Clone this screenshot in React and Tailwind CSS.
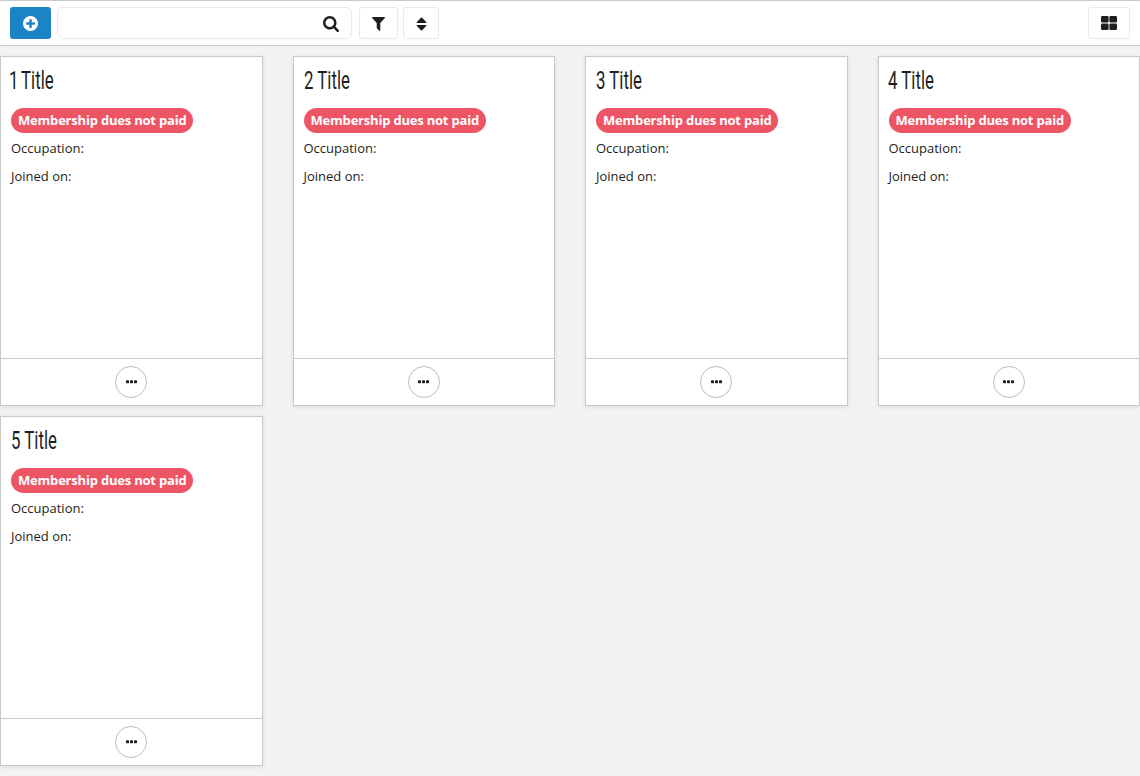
import React from "react";

const PlusIcon = () => (
  <svg className="mt-px h-[15px] w-[15px]" viewBox="0 0 1536 1536" fill="currentColor">
    <path d="M1216 832v-128q0-26-19-45t-45-19h-256v-256q0-26-19-45t-45-19h-128q-26 0-45 19t-19 45v256h-256q-26 0-45 19t-19 45v128q0 26 19 45t45 19h256v256q0 26 19 45t45 19h128q26 0 45-19t19-45v-256h256q26 0 45-19t19-45zm320-64q0 209-103 385.5t-279.5 279.5-385.5 103-385.5-103-279.5-279.5-103-385.5 103-385.5 279.5-279.5 385.5-103 385.5 103 279.5 279.5 103 385.5z" />
  </svg>
);

const SearchIcon = () => (
  <svg className="mt-[2px] h-4 w-4" viewBox="0 0 1664 1664" fill="currentColor">
    <path d="M1152 704q0-185-131.5-316.5t-316.5-131.5-316.5 131.5-131.5 316.5 131.5 316.5 316.5 131.5 316.5-131.5 131.5-316.5zm512 832q0 52-38 90t-90 38q-54 0-90-38l-343-342q-179 124-399 124-143 0-273.5-55.5t-225-150-150-225-55.5-273.5 55.5-273.5 150-225 225-150 273.5-55.5 273.5 55.5 225 150 150 225 55.5 273.5q0 220-124 399l343 343q37 37 37 90z" />
  </svg>
);

const FilterIcon = () => (
  <svg className="mt-[2px] h-[14px] w-[13px]" viewBox="0 0 1408 1408" preserveAspectRatio="none" fill="currentColor">
    <path d="M1403 39q17 41-14 70l-493 493v742q0 42-39 59-13 5-25 5-27 0-45-19l-256-256q-19-19-19-45v-486l-493-493q-31-29-14-70 17-39 59-39h1280q42 0 59 39z" />
  </svg>
);

const SortIcon = () => (
  <svg className="mt-[2px] h-[14px] w-[11px]" viewBox="0 0 11 14" fill="currentColor" stroke="currentColor" strokeLinejoin="round">
    <path d="M5.5 .7L10 5.5H1zM5.5 13.3L10 8.5H1z" />
  </svg>
);

const GridIcon = () => (
  <svg className="h-[14px] w-4" viewBox="0 0 16 14" fill="currentColor">
    <rect width="7.6" height="6.6" rx="1.3" />
    <rect x="8.4" width="7.6" height="6.6" rx="1.3" />
    <rect y="7.4" width="7.6" height="6.6" rx="1.3" />
    <rect x="8.4" y="7.4" width="7.6" height="6.6" rx="1.3" />
  </svg>
);

const DotsIcon = () => (
  <svg className="h-1 w-[11px]" viewBox="0 0 11 4" fill="currentColor">
    <rect y=".2" width="3" height="3" rx=".7" />
    <rect x="4" y=".2" width="3" height="3" rx=".7" />
    <rect x="8" y=".2" width="3" height="3" rx=".7" />
  </svg>
);

const buttonClass =
  "flex h-8 shrink-0 items-center justify-center rounded-[3px] border border-[#e9e9eb] bg-white";

const titleOffsets = {
  1: "-ml-[2px] [word-spacing:-2px]",
  4: "-ml-px",
};

function Card({ number }) {
  return (
    <article className="flex h-[350px] min-w-0 flex-col border border-[#c9c9c9] bg-white shadow-[0_1px_4px_rgba(0,0,0,0.1)]">
      <div className="flex flex-1 flex-col items-start px-[10px]">
        <h2
          className={
            "mt-[7px] h-8 origin-left scale-x-[0.635] whitespace-nowrap font-['Roboto',sans-serif] text-[26.5px] font-normal leading-8 " +
            (titleOffsets[number] || "")
          }
        >
          {number} Title
        </h2>
        <span className="mt-3 h-[25px] whitespace-nowrap rounded-full bg-[#ed5565] px-[7px] text-[13px] font-bold leading-[25px] tracking-[-0.2px] text-white">
          Membership dues not paid
        </span>
        <p className="mt-[6px] leading-[18px]">Occupation:</p>
        <p className="mt-[10px] leading-[18px]">Joined on:</p>
      </div>
      <footer className="flex h-[47px] items-center justify-center border-t border-[#c9c9c9]">
        <button aria-label="More actions" className="flex h-8 w-8 items-center justify-center rounded-full border border-[#bdbdbd]">
          <DotsIcon />
        </button>
      </footer>
    </article>
  );
}

export default function App() {
  return (
    <div className="min-h-screen bg-[#f2f2f2] font-['Open_Sans',sans-serif] text-[13px] text-[#1d1e20]">
      <header className="flex h-[46px] items-center border-y border-[#c9c9c9] bg-white px-[10px]">
        <button aria-label="Add" className="flex h-8 w-[41px] items-center justify-center rounded-[3px] bg-[#1c84c6] text-white">
          <PlusIcon />
        </button>
        <div className="ml-[6px] flex h-8 w-[295px] items-center rounded-md border border-[#e9e9eb] bg-white pr-3">
          <input aria-label="Search" className="min-w-0 flex-1 bg-transparent px-2 outline-none" />
          <SearchIcon />
        </div>
        <button aria-label="Filter" className={buttonClass + " ml-[7px] w-[39px]"}>
          <FilterIcon />
        </button>
        <button aria-label="Sort" className={buttonClass + " ml-[5px] w-9"}>
          <SortIcon />
        </button>
        <button aria-label="Grid view" className={buttonClass + " ml-auto w-[42px]"}>
          <GridIcon />
        </button>
      </header>
      <main className="grid grid-cols-4 gap-x-[30px] gap-y-[10px] pt-[10px]">
        {[1, 2, 3, 4, 5].map((n) => (
          <Card key={n} number={n} />
        ))}
      </main>
    </div>
  );
}
